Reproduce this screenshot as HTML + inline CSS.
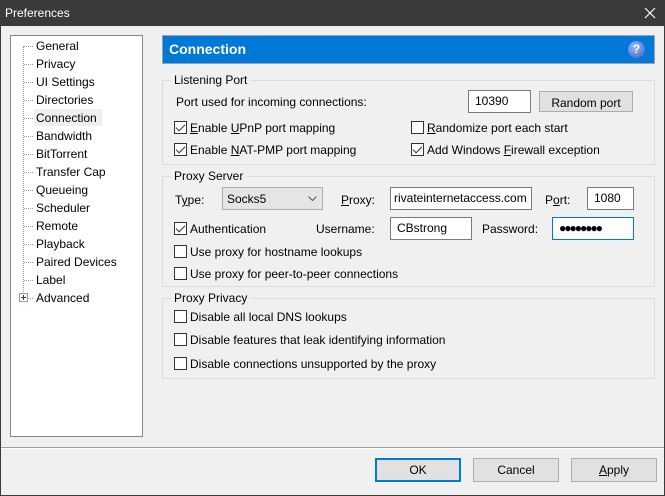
<!DOCTYPE html>
<html><head><meta charset="utf-8"><style>
*{box-sizing:border-box;margin:0;padding:0}
body{width:665px;height:496px;overflow:hidden;background:#f0f0f0;font-family:"Liberation Sans",sans-serif;font-size:12px;color:#000;position:relative}
.a{position:absolute;white-space:nowrap}
#title{left:0;top:0;width:665px;height:26px;background:#3a3a3a;color:#fff;font-size:12px;padding:6px 0 0 5px}
#frame{left:0;top:26px;width:665px;height:470px;border:1px solid #3a3a3a;border-top:none}
#tree{left:10px;top:35px;width:133px;height:402px;background:#fff;border:1px solid #828790}
.ti{position:absolute;left:25px}
.ti::before{content:"";position:absolute;left:-12px;top:7px;width:9px;border-top:1px dotted #999}
.gb{position:absolute;border:1px solid #dcdcdc}
.gl{position:absolute;background:#f0f0f0;padding:0 3px;top:-8px;left:8px}
.cb{position:absolute;width:13px;height:13px;border:1px solid #333;background:#fff}
.cb.c::after{content:"";position:absolute;left:3px;top:0px;width:4px;height:8px;border:solid #333;border-width:0 1.3px 1.3px 0;transform:rotate(45deg)}
.tb{position:absolute;background:#fff;border:1px solid #7a7a7a;padding:3px 0 0 6px;overflow:hidden}
.btn{position:absolute;background:#e1e1e1;border:1px solid #adadad;text-align:center;padding-top:4px}
</style></head><body>
<div class="a" id="title">Preferences</div>
<svg class="a" style="left:644px;top:7px" width="12" height="12"><path d="M1 1L11 11M11 1L1 11" stroke="#fff" stroke-width="1.2"/></svg>
<div class="a" id="frame"></div>
<div class="a" id="tree">
<div class="a" style="left:12px;top:10px;height:252px;border-left:1px dotted #999"></div>
<div class="ti" style="top:3px">General</div>
<div class="ti" style="top:21px">Privacy</div>
<div class="ti" style="top:39px">UI Settings</div>
<div class="ti" style="top:57px">Directories</div>
<div class="ti" style="top:75px">Connection</div>
<div class="a" style="left:23px;top:73px;width:68px;height:17px;background:#efefef;z-index:0"></div>
<div class="ti" style="top:75px;z-index:1">Connection</div>
<div class="ti" style="top:93px">Bandwidth</div>
<div class="ti" style="top:111px">BitTorrent</div>
<div class="ti" style="top:129px">Transfer Cap</div>
<div class="ti" style="top:147px">Queueing</div>
<div class="ti" style="top:165px">Scheduler</div>
<div class="ti" style="top:183px">Remote</div>
<div class="ti" style="top:201px">Playback</div>
<div class="ti" style="top:219px">Paired Devices</div>
<div class="ti" style="top:237px">Label</div>
<div class="ti" style="top:255px">Advanced</div>
<div style="position:absolute;left:8px;top:257px;width:9px;height:9px;border:1px solid #999;background:#fff"><div style="position:absolute;left:1px;top:3px;width:5px;border-top:1px solid #1a3a9a"></div><div style="position:absolute;left:3px;top:1px;height:5px;border-left:1px solid #1a3a9a"></div></div>
</div>
<div class="a" style="left:162px;top:35px;width:493px;height:29px;background:#0078d7;border:1px solid #a0a0a0;color:#fff;font-weight:bold;font-size:14px;padding:5px 0 0 6px">Connection</div>
<div class="a" style="left:628px;top:41px;width:17px;height:17px;border-radius:50%;background:radial-gradient(circle at 40% 35%,#9ab8ff,#3560c8);color:#fff;font-weight:bold;font-size:12px;text-align:center;line-height:17px">?</div>

<div class="gb" style="left:162px;top:80px;width:493px;height:85px"><span class="gl">Listening Port</span></div>
<div class="a" style="left:176px;top:95px">Port used for incoming connections:</div>
<div class="tb" style="left:468px;top:90px;width:63px;height:23px">10390</div>
<div class="btn" style="left:539px;top:91px;width:94px;height:21px">Random port</div>
<div class="cb c" style="left:174px;top:121px"></div><div class="a" style="left:190px;top:121px"><u>E</u>nable <u>U</u>PnP port mapping</div>
<div class="cb" style="left:411px;top:121px"></div><div class="a" style="left:427px;top:121px"><u>R</u>andomize port each start</div>
<div class="cb c" style="left:174px;top:143px"></div><div class="a" style="left:190px;top:143px">Enable <u>N</u>AT-PMP port mapping</div>
<div class="cb c" style="left:411px;top:143px"></div><div class="a" style="left:427px;top:143px">Add Windows <u>F</u>irewall exception</div>

<div class="gb" style="left:162px;top:176px;width:493px;height:111px"><span class="gl">Proxy Server</span></div>
<div class="a" style="left:175px;top:193px">T<u>y</u>pe:</div>
<div class="a" style="left:222px;top:187px;width:101px;height:23px;background:#e5e5e5;border:1px solid #adadad;padding:4px 0 0 4px">Socks5<svg style="position:absolute;right:5px;top:8px" width="9" height="5"><path d="M0.5 0.5L4.5 4.5L8.5 0.5" fill="none" stroke="#555"/></svg></div>
<div class="a" style="left:341px;top:193px"><u>P</u>roxy:</div>
<div class="tb" style="left:390px;top:187px;width:142px;height:23px;padding-left:3px">rivateinternetaccess.com</div>
<div class="a" style="left:545px;top:193px">P<u>o</u>rt:</div>
<div class="tb" style="left:587px;top:187px;width:47px;height:23px">1080</div>
<div class="cb c" style="left:174px;top:222px"></div><div class="a" style="left:190px;top:222px">Authentication</div>
<div class="a" style="left:316px;top:222px">Username:</div>
<div class="tb" style="left:390px;top:217px;width:82px;height:23px">CBstrong</div>
<div class="a" style="left:482px;top:222px">Password:</div>
<div class="tb" style="left:552px;top:217px;width:82px;height:23px;border-color:#0078d7;font-size:12px;padding-top:3px;letter-spacing:-2px">●●●●●●●●</div>
<div class="cb" style="left:174px;top:245px"></div><div class="a" style="left:190px;top:245px">Use proxy for hostname lookups</div>
<div class="cb" style="left:174px;top:267px"></div><div class="a" style="left:190px;top:267px">Use proxy for peer-to-peer connections</div>

<div class="gb" style="left:162px;top:298px;width:493px;height:81px"><span class="gl">Proxy Privacy</span></div>
<div class="cb" style="left:174px;top:310px"></div><div class="a" style="left:190px;top:310px">Disable all local DNS lookups</div>
<div class="cb" style="left:174px;top:333px"></div><div class="a" style="left:190px;top:333px">Disable features that leak identifying information</div>
<div class="cb" style="left:174px;top:357px"></div><div class="a" style="left:190px;top:357px">Disable connections unsupported by the proxy</div>

<div class="a" style="left:1px;top:447px;width:663px;height:2px;border-top:1px solid #a0a0a0;border-bottom:1px solid #fff"></div>
<div class="btn" style="left:375px;top:458px;width:86px;height:24px;border:2px solid #0078d7;padding-top:3px">OK</div>
<div class="btn" style="left:473px;top:458px;width:86px;height:24px">Cancel</div>
<div class="btn" style="left:571px;top:458px;width:86px;height:24px"><u>A</u>pply</div>
</body></html>
